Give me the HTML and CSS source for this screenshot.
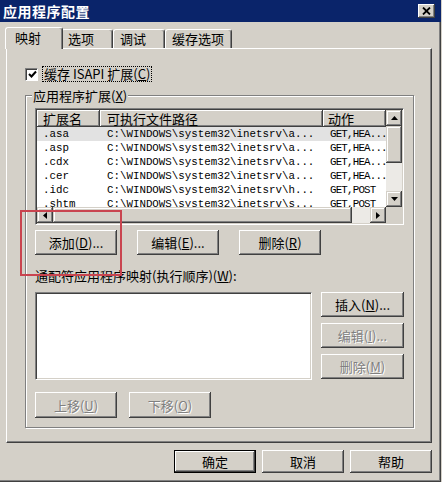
FILE: index.html
```html
<!DOCTYPE html>
<html lang="zh-CN">
<head>
<meta charset="utf-8">
<title>应用程序配置</title>
<link rel="stylesheet" href="styles.css">
</head>
<body>
<div class="window">
  <div class="titlebar">
    <span class="title">应用程序配置</span>
    <span class="close"><svg width="9" height="8" viewBox="0 0 9 8"><path d="M1 0.5 L8 7.5 M8 0.5 L1 7.5" stroke="#000" stroke-width="1.8" fill="none"/></svg></span>
  </div>
  <div class="tabs">
    <div class="tab active">映射</div>
    <div class="tab t2">选项</div>
    <div class="tab t2">调试</div>
    <div class="tab t4">缓存选项</div>
  </div>
  <div class="panel">
    <div class="check-row">
      <span class="checkbox"><svg width="9" height="9" viewBox="0 0 9 9"><path d="M1 4 L3.5 6.5 L8 1.5" stroke="#000" stroke-width="2" fill="none"/></svg></span>
      <span class="focus">缓存 ISAPI 扩展(<u>C</u>)</span>
    </div>
    <fieldset class="group">
      <legend>应用程序扩展(<u>X</u>)</legend>
      <div class="listview">
        <div class="lv-main">
          <div class="lv-header">
            <div class="hd c1">扩展名</div>
            <div class="hd c2">可执行文件路径</div>
            <div class="hd c3">动作</div>
          </div>
          <div class="row sel"><span class="c1">.asa</span><span class="c2">C:\WINDOWS\system32\inetsrv\a...</span><span class="c3">GET,HEA...</span></div>
          <div class="row"><span class="c1">.asp</span><span class="c2">C:\WINDOWS\system32\inetsrv\a...</span><span class="c3">GET,HEA...</span></div>
          <div class="row"><span class="c1">.cdx</span><span class="c2">C:\WINDOWS\system32\inetsrv\a...</span><span class="c3">GET,HEA...</span></div>
          <div class="row"><span class="c1">.cer</span><span class="c2">C:\WINDOWS\system32\inetsrv\a...</span><span class="c3">GET,HEA...</span></div>
          <div class="row"><span class="c1">.idc</span><span class="c2">C:\WINDOWS\system32\inetsrv\h...</span><span class="c3">GET,POST</span></div>
          <div class="row"><span class="c1">.shtm</span><span class="c2">C:\WINDOWS\system32\inetsrv\s...</span><span class="c3">GET,POST</span></div>
        </div>
        <div class="vscroll">
          <div class="sbtn"><svg width="7" height="4" viewBox="0 0 7 4"><path d="M3.5 0 L7 4 L0 4 Z" fill="#000"/></svg></div>
          <div class="vthumb"></div>
          <div class="vtrack"></div>
          <div class="sbtn"><svg width="7" height="4" viewBox="0 0 7 4"><path d="M0 0 L7 0 L3.5 4 Z" fill="#000"/></svg></div>
        </div>
        <div class="hscroll">
          <div class="sbtn"><svg width="4" height="7" viewBox="0 0 4 7"><path d="M0 3.5 L4 0 L4 7 Z" fill="#000"/></svg></div>
          <div class="hthumb"></div>
          <div class="htrack"></div>
          <div class="sbtn"><svg width="4" height="7" viewBox="0 0 4 7"><path d="M0 0 L4 3.5 L0 7 Z" fill="#000"/></svg></div>
        </div>
        <div class="corner"></div>
      </div>
      <div class="btn-row">
        <div class="btn">添加(<u>D</u>)...</div>
        <div class="btn">编辑(<u>E</u>)...</div>
        <div class="btn">删除(<u>R</u>)</div>
      </div>
      <div class="wild-label">通配符应用程序映射(执行顺序)(<u>W</u>):</div>
      <div class="wild-row">
        <div class="listbox"></div>
        <div class="btn-col">
          <div class="btn">插入(<u>N</u>)...</div>
          <div class="btn disabled">编辑(<u>I</u>)...</div>
          <div class="btn disabled">删除(<u>M</u>)</div>
        </div>
      </div>
      <div class="move-row">
        <div class="btn disabled">上移(<u>U</u>)</div>
        <div class="btn disabled">下移(<u>O</u>)</div>
      </div>
    </fieldset>
  </div>
  <div class="footer">
    <div class="btn default">确定</div>
    <div class="btn">取消</div>
    <div class="btn">帮助</div>
  </div>
  <div class="annot"></div>
</div>
</body>
</html>
```
FILE: styles.css
```css
body {
  margin: 0;
  background: #d4d0c8;
  font-family: "Noto Sans CJK SC", "Liberation Sans", sans-serif;
  font-size: 13px;
  color: #000;
}

.window {
  position: relative;
  width: 441px;
  height: 482px;
  box-sizing: border-box;
  background: #d4d0c8;
  box-shadow: inset -1px -1px #404040, inset -2px -2px #808080;
  overflow: hidden;
}

.titlebar {
  height: 22px;
  background: #0a246a;
  display: flex;
  align-items: center;
  justify-content: space-between;
  padding: 0 6px 0 3px;
}

.title {
  color: #fff;
  font-weight: bold;
  font-size: 14px;
  line-height: 16px;
  letter-spacing: 0.5px;
}

.close {
  width: 17px;
  height: 14px;
  background: #d4d0c8;
  display: flex;
  align-items: center;
  justify-content: center;
  box-shadow: inset -1px -1px #404040, inset 1px 1px #fff, inset -2px -2px #808080;
}

.tabs {
  display: flex;
  align-items: flex-end;
  height: 21px;
  margin-top: 5px;
  padding-left: 7px;
}

.tab {
  box-sizing: border-box;
  height: 19px;
  border-top: 1px solid #fff;
  border-left: 1px solid #fff;
  border-right: 1px solid #404040;
  box-shadow: inset -1px 0 #808080;
  border-radius: 3px 3px 0 0;
  padding-left: 6px;
  line-height: 17px;
  white-space: nowrap;
}

.tab.t2 { width: 52px; }
.tab.t4 { width: 67px; }

.tab.active {
  width: 58px;
  height: 22px;
  margin: 0 -2px -1px;
  padding-left: 9px;
  line-height: 19px;
  background: #d4d0c8;
  position: relative;
  z-index: 1;
}

.panel {
  box-sizing: border-box;
  margin-left: 6px;
  width: 426px;
  height: 395px;
  border: 1px solid;
  border-color: #fff #404040 #404040 #fff;
  box-shadow: inset -1px -1px #808080;
  padding: 17px 0 0 18px;
}

.check-row {
  display: flex;
  align-items: center;
  height: 16px;
}

.checkbox {
  box-sizing: border-box;
  width: 13px;
  height: 13px;
  background: #fff;
  border: 1px solid;
  border-color: #808080 #fff #fff #808080;
  box-shadow: inset 1px 1px #404040;
  display: flex;
  align-items: center;
  justify-content: center;
  padding: 1px 0 0 1px;
}

.focus {
  margin-left: 4px;
  padding: 0 1px;
  border: 1px dotted #000;
  line-height: 14px;
}

.group {
  box-sizing: border-box;
  width: 389px;
  margin: 6px 0 0 0;
  padding: 5px 9px 9px 9px;
  border: 1px solid #808080;
  box-shadow: inset 1px 1px #fff, 1px 1px #fff;
  min-width: 0;
}

.group legend {
  padding: 0 1px;
  margin-left: -3px;
  line-height: 15px;
  background: #d4d0c8;
}

.listview {
  box-sizing: border-box;
  width: 369px;
  height: 117px;
  border: 1px solid;
  border-color: #808080 #fff #fff #808080;
  box-shadow: inset 1px 1px #404040, inset -1px -1px #d4d0c8;
  padding: 1px;
  background: #fff;
  display: grid;
  grid-template-columns: 1fr 16px;
  grid-template-rows: 97px 16px;
}

.lv-main {
  overflow: hidden;
  background: #fff;
}

.lv-header {
  display: flex;
  height: 17px;
  background: #d4d0c8;
}

.hd {
  box-sizing: border-box;
  height: 17px;
  line-height: 17px;
  box-shadow: inset -1px -1px #404040, inset 1px 1px #fff, inset -2px -2px #808080;
  white-space: nowrap;
}

.c1 { width: 63px; padding-left: 6px; box-sizing: border-box; flex: none; }
.c2 { width: 223px; padding-left: 7px; box-sizing: border-box; flex: none; }
.c3 { width: 63px; padding-left: 5px; box-sizing: border-box; flex: none; }

.row {
  display: flex;
  height: 14px;
  line-height: 14px;
  font-family: "Liberation Mono", monospace;
  font-size: 10.8px;
  white-space: nowrap;
}

.row span { overflow: hidden; }
.row .c3 { letter-spacing: -0.8px; padding-left: 7px; }

.row.sel { background: #e2e2e2; }

.vscroll {
  display: flex;
  flex-direction: column;
  background: #d4d0c8;
}

.sbtn {
  width: 16px;
  height: 16px;
  flex: none;
  box-sizing: border-box;
  background: #d4d0c8;
  box-shadow: inset -1px -1px #404040, inset 1px 1px #d4d0c8, inset -2px -2px #808080, inset 2px 2px #fff;
  display: flex;
  align-items: center;
  justify-content: center;
}

.vthumb {
  height: 37px;
  flex: none;
  background: #d4d0c8;
  box-shadow: inset -1px -1px #404040, inset 1px 1px #d4d0c8, inset -2px -2px #808080, inset 2px 2px #fff;
}

.vtrack {
  flex: 1;
  background: #eceae6;
}

.hscroll {
  display: flex;
  background: #d4d0c8;
}

.hthumb {
  width: 299px;
  flex: none;
  background: #d4d0c8;
  box-shadow: inset -1px -1px #404040, inset 1px 1px #d4d0c8, inset -2px -2px #808080, inset 2px 2px #fff;
}

.htrack {
  flex: 1;
  background: #eceae6;
}

.corner { background: #d4d0c8; }

.btn {
  box-sizing: border-box;
  width: 82px;
  height: 25px;
  display: flex;
  align-items: center;
  justify-content: center;
  background: #d4d0c8;
  box-shadow: inset -1px -1px #404040, inset 1px 1px #fff, inset -2px -2px #808080, inset 2px 2px #d4d0c8;
  white-space: nowrap;
  line-height: 15px;
}

.btn.disabled {
  color: #808080;
  text-shadow: 1px 1px #fff;
}

.btn.default {
  border: 1px solid #000;
}

.btn-row {
  display: flex;
  gap: 20px;
  margin-top: 5px;
}

.wild-label {
  margin-top: 13px;
  line-height: 15px;
}

.wild-row {
  display: flex;
  gap: 9px;
  margin-top: 9px;
}

.listbox {
  box-sizing: border-box;
  width: 278px;
  height: 88px;
  background: #fff;
  border: 1px solid;
  border-color: #808080 #fff #fff #808080;
  box-shadow: inset 1px 1px #404040, inset -1px -1px #d4d0c8;
}

.btn-col {
  display: flex;
  flex-direction: column;
  gap: 6px;
}

.btn-col .btn { width: 83px; }

.move-row {
  display: flex;
  gap: 12px;
  margin-top: 12px;
}

.move-row .btn { height: 26px; }

.footer {
  display: flex;
  justify-content: flex-end;
  gap: 6px;
  margin-top: 7px;
  padding-right: 9px;
}

.footer .btn { height: 23px; }

.annot {
  position: absolute;
  left: 20px;
  top: 210px;
  width: 102px;
  height: 66px;
  box-sizing: border-box;
  border: 2px solid #c9444f;
  pointer-events: none;
}
```
